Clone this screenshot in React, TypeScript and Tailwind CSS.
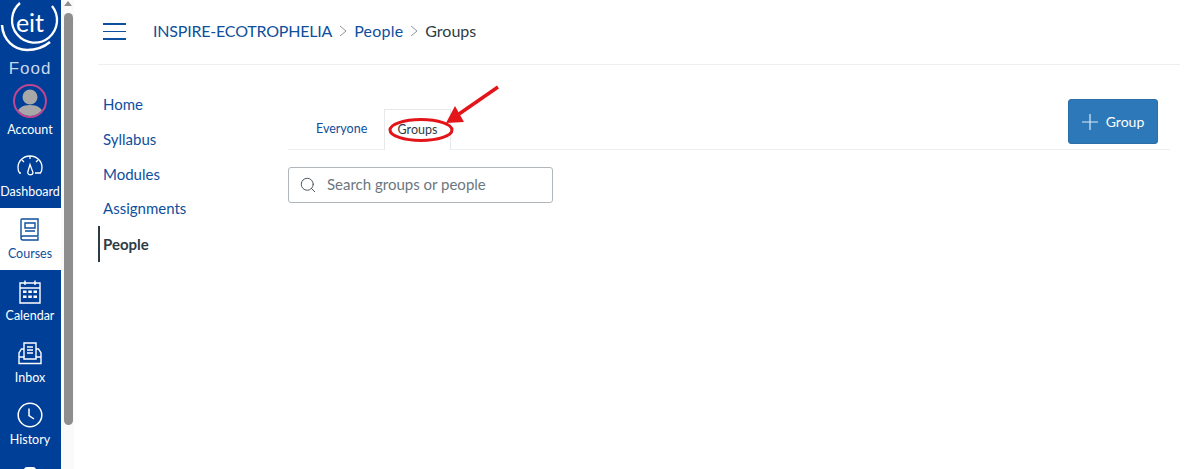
import React from 'react';
import { Search } from 'lucide-react';

const navClass = 'flex h-[62px] w-full shrink-0 flex-col items-center justify-end pb-[8px] pr-[1px] text-[12.5px] leading-[16px] text-white';

const DashboardIcon = () => (
    <svg width="26" height="22" viewBox="0 0 26 22" fill="none" stroke="currentColor" strokeWidth="1.3">
        <path d="M4 19H2.500C1.500 17.500 1 15.500 1 13.500C1 7 6.500 2 13 2S25 7 25 13.500C25 15.500 24.500 17.500 23.500 19H18" />
        <path d="M13 10.500L16 18.500C16 20 14.500 20.800 13 20.800S10.500 19.500 10.800 18Z" />
        <path d="M13 2V5M5 6L7 8M21 6L19 8" />
    </svg>
);

const CoursesIcon = () => (
    <svg width="20" height="24" viewBox="0 0 20 24" fill="none" stroke="currentColor" strokeWidth="1.4">
        <path d="M1 19V2C1 1.400 1.400 1 2 1H18V18H3C1.800 18 1 18.800 1 20S1.800 22 3 22H18V19" />
        <path d="M5 5H15V10H5ZM5 13H15" />
    </svg>
);

const CalendarIcon = () => (
    <svg width="22" height="24" viewBox="0 0 22 24" fill="none" stroke="currentColor" strokeWidth="1.4">
        <path d="M1 3H21V23H1ZM1 8H21M6 0.500V5M16 0.500V5" />
        <path fill="currentColor" stroke="none" d="M4 10.500H7.500V13H4ZM9.300 10.500H12.800V13H9.300ZM14.500 10.500H18V13H14.500ZM4 15.500H7.500V18H4ZM9.300 15.500H12.800V18H9.300ZM14.500 15.500H18V18H14.500Z" />
    </svg>
);

const InboxIcon = () => (
    <svg width="24" height="23" viewBox="0 0 24 23" fill="none" stroke="currentColor" strokeWidth="1.4">
        <path d="M6 15V1H18V15M9 5H15M9 8H15M9 11H15" />
        <path d="M6 7H3.500L1 11V21.500H23V11L20.500 7H18M1 15H6V17H18V15H23" />
    </svg>
);

const HistoryIcon = () => (
    <svg width="26" height="26" viewBox="0 0 26 26" fill="none" stroke="currentColor" strokeWidth="1.500">
        <circle cx="13" cy="13" r="11.800" />
        <path d="M12 6.500V13.500L17 17" />
    </svg>
);

const Crumb = () => (
    <svg className="mx-[7px]" width="8" height="12" viewBox="0 0 8 12" fill="none" stroke="#8b969e" strokeWidth="1">
        <path d="M1 1L7 6L1 11" />
    </svg>
);

const Sidebar = () => (
    <aside className="flex h-[469px] w-[61px] shrink-0 flex-col overflow-hidden bg-[#003f97]">
        <div className="flex h-[84px] shrink-0 flex-col items-center">
            <svg className="shrink-0" width="61" height="60" viewBox="0 0 61 60" fill="none" stroke="#fff">
                <path strokeWidth="2.300" d="M20 3A22.500 22.500 0 1 0 52 6" />
                <path strokeWidth="2.500" d="M2 25C3 40 14 50 27 50C36 50 44 47 50 42" />
                <text x="30" y="32" textAnchor="middle" fontSize="25" fill="#fff" stroke="none" fontFamily="Lato, sans-serif">eit</text>
            </svg>
            <span className="mt-[2px] pr-[1px] text-[17px] leading-[14px] tracking-[1px] text-[#c9d7ec] [font-family:'Liberation_Sans',sans-serif]">Food</span>
        </div>
        <div className="relative h-[62px] w-full shrink-0">
            <div className={navClass}>
                <span>Account</span>
            </div>
            <div className="absolute left-[13px] top-0 flex h-[34px] w-[34px] items-end justify-center overflow-hidden rounded-full border-2 border-[#c0468f] bg-[#003f97]">
                <svg width="30" height="30" viewBox="0 0 30 30" fill="#a8a8a8">
                    <circle cx="15" cy="11" r="7.500" />
                    <path d="M1 30C2 22 8 19 15 19S28 22 29 30Z" />
                </svg>
            </div>
        </div>
        <div className={navClass}>
            <span className="mb-[8px]"><DashboardIcon /></span>
            <span>Dashboard</span>
        </div>
        <div className="flex h-[62px] w-full shrink-0 flex-col items-center justify-end bg-white pb-[8px] pr-[1px] text-[12.5px] leading-[16px] text-[#0e4f9e]">
            <span className="mb-[4px]"><CoursesIcon /></span>
            <span>Courses</span>
        </div>
        <div className={navClass}>
            <span className="mb-[4px]"><CalendarIcon /></span>
            <span>Calendar</span>
        </div>
        <div className={navClass}>
            <span className="mb-[5px]"><InboxIcon /></span>
            <span>Inbox</span>
        </div>
        <div className={navClass}>
            <span className="mb-[4px]"><HistoryIcon /></span>
            <span>History</span>
        </div>
        <div className="flex shrink-0 justify-center pr-[1px] pt-[11px] text-white">
            <div className="h-[10px] w-[12px] rounded-t-[3px] border-2 border-white" />
        </div>
    </aside>
);

const ScrollBar = () => (
    <div className="flex h-[469px] w-[13px] shrink-0 flex-col items-center bg-[#fafafa] pl-[1px]">
        <div className="mt-[1px] h-0 w-0 border-x-[4px] border-b-[5px] border-x-transparent border-b-[#8e8e8e]" />
        <div className="mt-[7px] h-[412px] w-[9px] rounded-full bg-[#8e8e8e]" />
    </div>
);

const Breadcrumbs = () => (
    <div className="flex h-[65px] items-center border-b border-[#eceff1] pb-[2px]">
        <div className="ml-[5px] flex w-[23px] flex-col gap-[6px]">
            <div className="h-[2px] bg-[#0e4f9e]" />
            <div className="h-[1px] bg-[#0e4f9e]" />
            <div className="h-[2px] bg-[#0e4f9e]" />
        </div>
        <div className="ml-[27px] flex items-center text-[16px] text-[#0e4f9e]">
            <span className="tracking-[-0.2px]">INSPIRE-ECOTROPHELIA</span>
            <Crumb />
            <span className="tracking-[0.2px]">People</span>
            <Crumb />
            <span className="text-[#2d3b45]">Groups</span>
        </div>
    </div>
);

const CourseNav = () => (
    <ul className="mt-[22px] w-[190px] shrink-0 text-[15px] text-[#0e4f9e]">
        <li className="flex h-[34.750px] items-center pl-[5px]">Home</li>
        <li className="flex h-[34.750px] items-center pl-[5px]">Syllabus</li>
        <li className="flex h-[34.750px] items-center pl-[5px]">Modules</li>
        <li className="flex h-[34.750px] items-center pl-[5px]">Assignments</li>
        <li className="flex h-[36px] items-center border-l-2 border-[#2d3b45] pl-[3px] font-bold text-[#2d3b45]">People</li>
    </ul>
);

const Annotation = () => (
    <svg className="absolute left-[90px] top-[-16px]" width="130" height="70" viewBox="0 0 130 70" fill="none">
        <ellipse cx="43" cy="47" rx="31" ry="10.500" stroke="#e3151a" strokeWidth="3" />
        <path d="M120 4L81 31" stroke="#e3151a" strokeWidth="3.500" />
        <path d="M68 40L77 23L86 39Z" fill="#e3151a" />
    </svg>
);

const PeopleContent = () => (
    <div className="relative mr-[10px] mt-[34px] flex-1">
        <div className="flex h-[51px] items-end justify-between border-b border-[#eceff1]">
            <div className="ml-[28px] flex text-[12.5px]">
                <div className="flex h-[40px] w-[68px] items-center text-[#0e4f9e]">Everyone</div>
                <div className="mb-[-1px] flex h-[41px] w-[67px] items-center justify-center border-x border-t border-[#e6e9eb] bg-white text-[#2d3b45]">Groups</div>
            </div>
            <button className="mb-[5px] mr-[12px] flex h-[45px] w-[90px] items-center justify-center gap-[8px] rounded-[3px] border border-[#2a6fa8] bg-[#2d78b8] text-[14px] text-white">
                <svg width="16" height="16" viewBox="0 0 16 16" stroke="#dbe9f5" strokeWidth="1.200">
                    <path d="M8 0V16M0 8H16" />
                </svg>
                Group
            </button>
        </div>
        <div className="mt-[17px] flex h-[36px] w-[265px] items-center rounded-[3px] border border-[#b0b6ba] pb-[1px] pl-[10px] text-[#6b7780]">
            <Search size={18} strokeWidth={1.300} className="text-[#4a555d]" />
            <span className="ml-[10px] text-[15px]">Search groups or people</span>
        </div>
        <Annotation />
    </div>
);

export default function App() {
    return (
        <div className="flex h-[469px] w-[1200px] overflow-hidden bg-white [font-family:Lato,sans-serif]">
            <Sidebar />
            <ScrollBar />
            <main className="ml-[24px] mr-[20px] flex-1">
                <Breadcrumbs />
                <div className="flex">
                    <CourseNav />
                    <PeopleContent />
                </div>
            </main>
        </div>
    );
}
